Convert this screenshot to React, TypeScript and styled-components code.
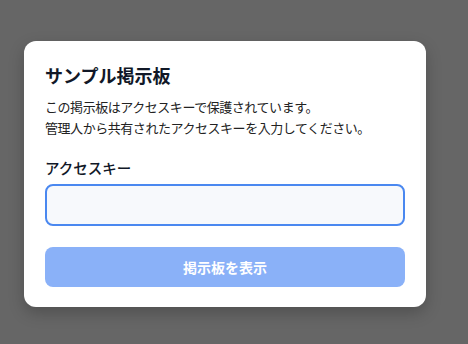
import React, { useState } from "react";
import styled, { createGlobalStyle } from "styled-components";

const GlobalStyle = createGlobalStyle`
  html, body {
    margin: 0;
    padding: 0;
    background: #666666;
    font-family: "Noto Sans CJK JP", "Noto Sans", sans-serif;
  }
  * {
    box-sizing: border-box;
  }
`;

const Overlay = styled.div`
  width: 468px;
  height: 344px;
  padding: 41px 0 0 24px;
`;

const Card = styled.div`
  width: 402px;
  background: #ffffff;
  border-radius: 12px;
  padding: 21px 21px 20px;
  box-shadow: 0 6px 16px rgba(0, 0, 0, 0.22);
  display: flex;
  flex-direction: column;
`;

const Title = styled.h1`
  margin: 0;
  font-size: 18px;
  line-height: 27px;
  font-weight: 700;
  color: #111827;
`;

const Description = styled.p`
  margin: 7px 0 0;
  font-size: 13px;
  line-height: 21px;
  letter-spacing: -0.45px;
  color: #222222;
`;

const Label = styled.label`
  margin-top: 19px;
  font-size: 14.5px;
  line-height: 21px;
  font-weight: 500;
  color: #111827;
`;

const KeyInput = styled.input`
  margin-top: 6px;
  width: 100%;
  height: 42px;
  border: 2px solid #4a88f0;
  border-radius: 8px;
  background: #f7f9fc;
  padding: 0 12px;
  font-size: 14px;
  font-family: inherit;
  outline: none;
`;

const SubmitButton = styled.button<{ $disabled: boolean }>`
  margin-top: 21px;
  width: 100%;
  height: 40px;
  border: none;
  border-radius: 8px;
  background: ${(p) => (p.$disabled ? "#8ab1f8" : "#3b82f6")};
  color: #ffffff;
  font-family: inherit;
  font-size: 14px;
  font-weight: 700;
  cursor: ${(p) => (p.$disabled ? "not-allowed" : "pointer")};
`;

const App: React.FC = () => {
  const [accessKey, setAccessKey] = useState("");

  return (
    <>
      <GlobalStyle />
      <Overlay>
        <Card>
          <Title>サンプル掲示板</Title>
          <Description>
            この掲示板はアクセスキーで保護されています。
            <br />
            管理人から共有されたアクセスキーを入力してください。
          </Description>
          <Label htmlFor="access-key">アクセスキー</Label>
          <KeyInput
            id="access-key"
            type="password"
            value={accessKey}
            onChange={(e) => setAccessKey(e.target.value)}
          />
          <SubmitButton $disabled={accessKey === ""} disabled={accessKey === ""}>
            掲示板を表示
          </SubmitButton>
        </Card>
      </Overlay>
    </>
  );
};

export default App;
